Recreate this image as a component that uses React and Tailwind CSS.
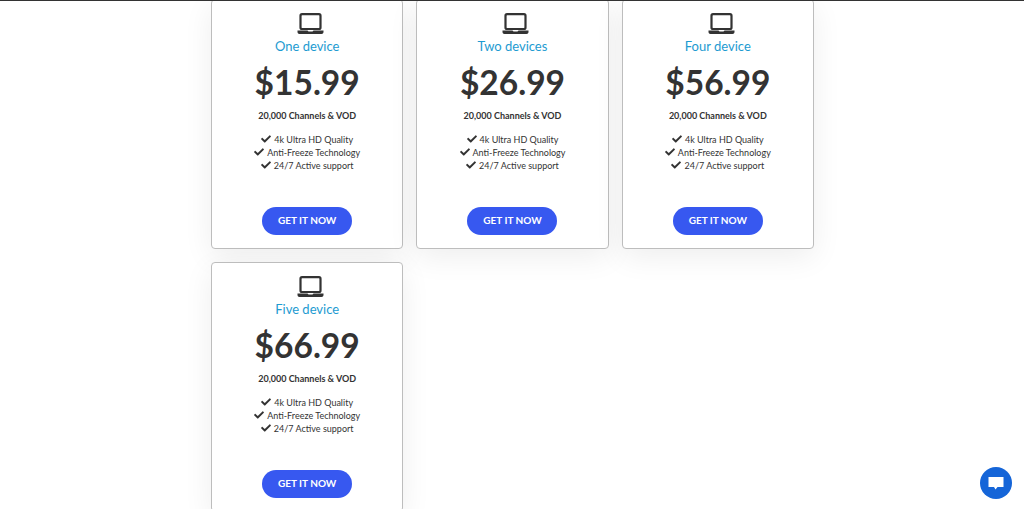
import React from 'react';
import { FaCheck } from 'react-icons/fa';

const plans = [
  { name: 'One device', price: '$15.99' },
  { name: 'Two devices', price: '$26.99' },
  { name: 'Four device', price: '$56.99' },
  { name: 'Five device', price: '$66.99' },
];

const features = ['4k Ultra HD Quality', 'Anti-Freeze Technology', '24/7 Active support'];

const LaptopIcon = () => (
  <svg width="27" height="22" viewBox="0 0 27 22" fill="none" className="block ml-[7px]">
    <rect x="3.5" y="1.2" width="20" height="14.8" rx="1.5" stroke="#333333" strokeWidth="2.2" />
    <path d="M0.5 17.5H10.5L11.5 18.5H15.5L16.5 17.5H26.5V19C26.5 20.2 25.7 21 24.5 21H2.5C1.3 21 0.5 20.2 0.5 19V17.5Z" fill="#333333" />
  </svg>
);

const PlanCard = ({ plan }) => (
  <div className="h-[250px] flex flex-col items-center bg-white border border-[#bdbdbd] rounded-[4px] shadow-[0_8px_30px_rgba(0,0,0,0.07)] pt-[13px]">
    <LaptopIcon />
    <h3 className="mt-[1px] text-[13px] leading-[20px] text-[#1d9bd1]">{plan.name}</h3>
    <div className="mt-[2px] text-[33.5px] leading-[48px] font-bold text-[#333333]">{plan.price}</div>
    <p className="mt-[3px] text-[9px] leading-[14px] font-bold text-[#333333]">20,000 Channels &amp; VOD</p>
    <ul className="mt-[10px] flex flex-col items-center">
      {features.map((item) => (
        <li key={item} className="flex items-center h-[13px] text-[9px] text-[#333333]">
          <FaCheck className="w-[10px] h-[10px] mr-[3px] -mt-[2px] text-[#333333]" />
          <span>{item}</span>
        </li>
      ))}
    </ul>
    <a className="mt-[35px] w-[90px] h-[28px] pb-px flex items-center justify-center rounded-full bg-[#3758f0] text-white text-[10px] font-bold">
      GET IT NOW
    </a>
  </div>
);

export default function App() {
  return (
    <div className="relative h-[509px] overflow-hidden bg-white font-['Lato','Open_Sans',sans-serif]">
      <div className="relative z-10 h-px bg-[#333333]"></div>
      <div className="-mt-[2px] ml-[211px] w-[603px] grid grid-cols-3 gap-x-[13px] gap-y-[13px]">
        {plans.map((plan) => (
          <PlanCard key={plan.name} plan={plan} />
        ))}
      </div>
      {/* chat bubble */}
      <button className="absolute left-[980px] top-[467px] w-[32px] h-[32px] rounded-full bg-[#1565d8] flex items-center justify-center">
        <svg width="16" height="14" viewBox="0 0 16 14" className="block">
          <path d="M0.5 1H15.5V11H9.5L7.5 13.5L6 11H0.5Z" fill="#ffffff" />
        </svg>
      </button>
    </div>
  );
}
